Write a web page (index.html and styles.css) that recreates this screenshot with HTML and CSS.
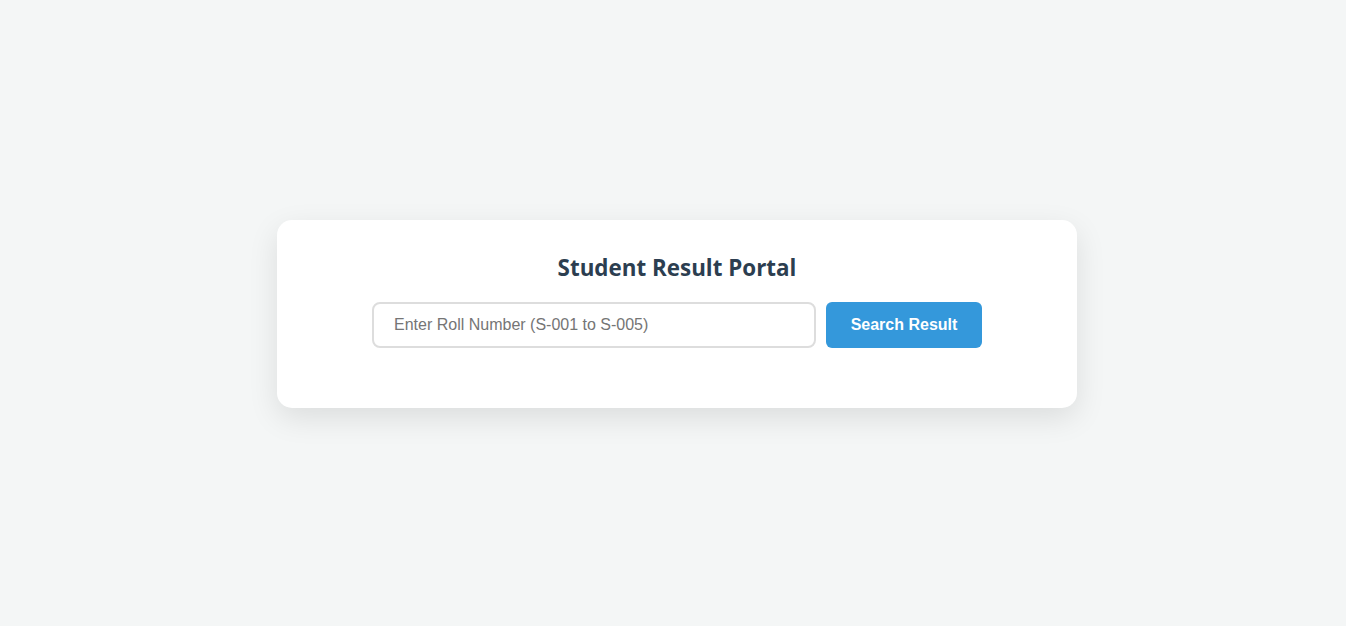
FILE: index.html
```html
<!DOCTYPE html>
<html lang="en">

<head>
    <meta charset="UTF-8">
    <meta name="viewport" content="width=device-width, initial-scale=1.0">
    <title>Student Result Portal</title>
    <link rel="stylesheet" href="styles.css">
</head>

<body>
    <div class="container">
        <h2>Student Result Portal</h2>
        <div class="search-box">
            <input type="text" class="roll" placeholder="Enter Roll Number (S-001 to S-005)">
            <button class="search">Search Result</button>
        </div>
        <div class="result"></div>
    </div>
</body>

</html>
```

FILE: styles.css
```css
* {
    box-sizing: border-box;
}

body {
    margin: 0;
    padding: 2px 0 0 8px;
    min-height: 626px;
    display: flex;
    align-items: center;
    justify-content: center;
    background-color: #f4f6f6;
    font-family: "Liberation Sans", Arial, sans-serif;
}

.container {
    width: 800px;
    padding: 32px 40px 60px;
    background-color: #fff;
    border-radius: 15px;
    box-shadow: 0 10px 30px rgba(0, 0, 0, 0.1);
    text-align: center;
}

h2 {
    margin: 0 0 18px;
    font-family: "Open Sans", "Noto Sans", sans-serif;
    font-size: 22.4px;
    line-height: 32px;
    font-weight: 700;
    color: #2c3e50;
}

.search-box {
    display: flex;
    justify-content: center;
    gap: 10px;
}

.roll {
    width: 444px;
    height: 46px;
    padding: 0 20px;
    border: 2px solid #ddd;
    border-radius: 8px;
    font-family: "Liberation Sans", Arial, sans-serif;
    font-size: 16px;
    color: #333;
    outline: none;
}

.roll::placeholder {
    color: #757575;
}

.search {
    width: 156px;
    height: 46px;
    border: none;
    border-radius: 6px;
    background-color: #3498db;
    color: #fff;
    font-family: "Liberation Sans", Arial, sans-serif;
    font-size: 16px;
    font-weight: 700;
    cursor: pointer;
}
```
